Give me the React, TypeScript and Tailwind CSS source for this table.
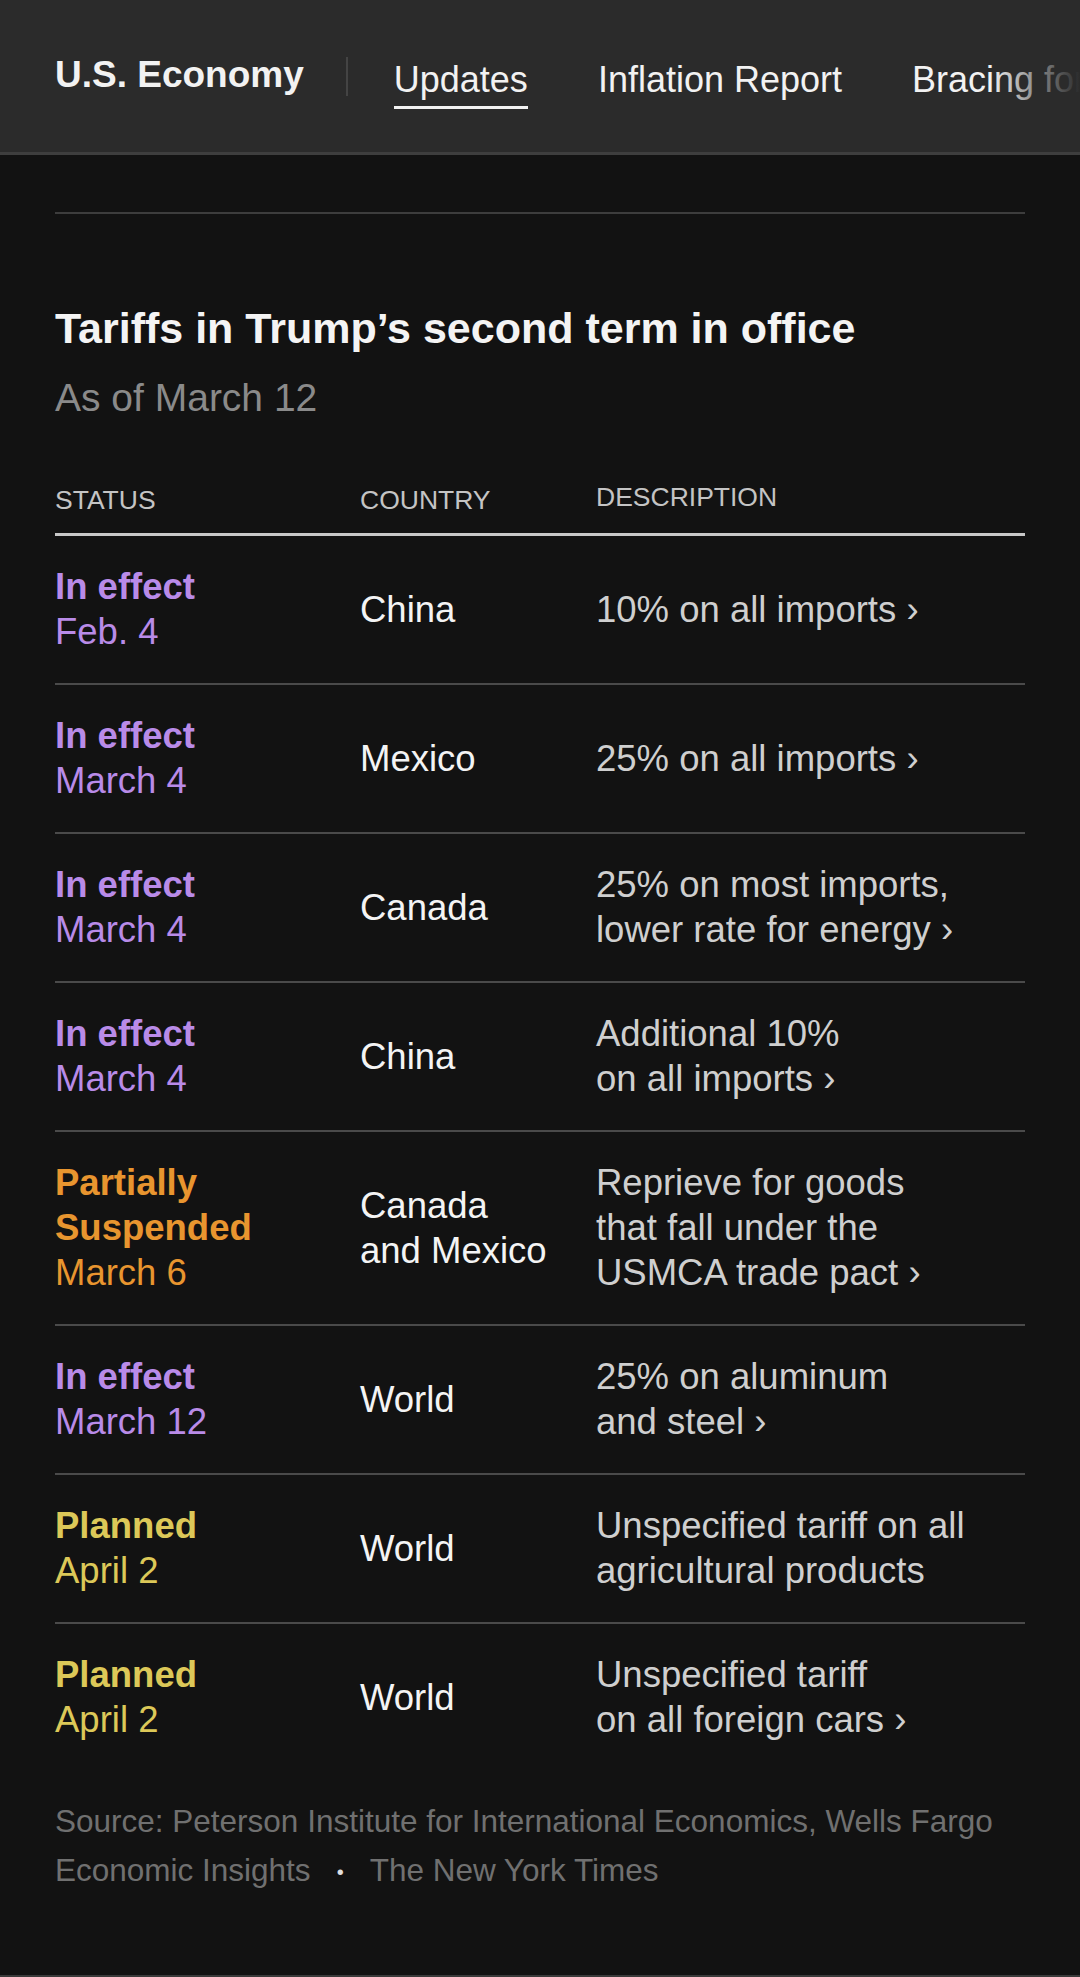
import React from "react";

type Row = {
  status: string[];
  date: string;
  tone: "purple" | "orange" | "yellow";
  country: string[];
  desc: string[];
  arrow: boolean;
};

const rows: Row[] = [
  { status: ["In effect"], date: "Feb. 4", tone: "purple", country: ["China"], desc: ["10% on all imports"], arrow: true },
  { status: ["In effect"], date: "March 4", tone: "purple", country: ["Mexico"], desc: ["25% on all imports"], arrow: true },
  {
    status: ["In effect"],
    date: "March 4",
    tone: "purple",
    country: ["Canada"],
    desc: ["25% on most imports,", "lower rate for energy"],
    arrow: true,
  },
  {
    status: ["In effect"],
    date: "March 4",
    tone: "purple",
    country: ["China"],
    desc: ["Additional 10%", "on all imports"],
    arrow: true,
  },
  {
    status: ["Partially", "Suspended"],
    date: "March 6",
    tone: "orange",
    country: ["Canada", "and Mexico"],
    desc: ["Reprieve for goods", "that fall under the", "USMCA trade pact"],
    arrow: true,
  },
  {
    status: ["In effect"],
    date: "March 12",
    tone: "purple",
    country: ["World"],
    desc: ["25% on aluminum", "and steel"],
    arrow: true,
  },
  {
    status: ["Planned"],
    date: "April 2",
    tone: "yellow",
    country: ["World"],
    desc: ["Unspecified tariff on all", "agricultural products"],
    arrow: false,
  },
  {
    status: ["Planned"],
    date: "April 2",
    tone: "yellow",
    country: ["World"],
    desc: ["Unspecified tariff", "on all foreign cars"],
    arrow: true,
  },
];

const toneClass = {
  purple: "text-[#b98be8]",
  orange: "text-[#e8952f]",
  yellow: "text-[#dcc858]",
};

const Header = () => (
  <div className="relative flex h-[155px] items-start overflow-hidden whitespace-nowrap border-b-[3px] border-[#3e3e3e] bg-[#2b2b2b] pl-[55px]">
    <div className="mt-[53px] shrink-0 text-[37px] font-bold leading-[44px] text-[#f2f2f2]">
      U.S. Economy
    </div>
    <div className="ml-[42px] mt-[57px] h-[39px] w-[2px] shrink-0 bg-[#444444]" />
    <div className="ml-[46px] mt-[58px] flex shrink-0 gap-[70px] text-[36px] leading-[44px] text-[#f2f2f2]">
      <div className="border-b-[3px] border-[#f2f2f2] pb-1">Updates</div>
      <div>Inflation Report</div>
      <div>Bracing for Higher Prices</div>
    </div>
    <div className="absolute right-0 top-0 h-[152px] w-[90px] bg-gradient-to-r from-[#2b2b2b00] to-[#2b2b2b]" />
  </div>
);

const TariffRow = ({ row, last }: { row: Row; last: boolean }) => (
  <div
    className={`grid grid-cols-[305px_236px_1fr] items-center pt-[28px] pb-[29px] text-[36.5px] leading-[45px] ${
      last ? "" : "border-b-2 border-[#4a4a4a]"
    }`}
  >
    <div className={toneClass[row.tone]}>
      {row.status.map((s) => (
        <div key={s} className="font-bold">
          {s}
        </div>
      ))}
      <div>{row.date}</div>
    </div>
    <div className="text-[#f4f4f4]">
      {row.country.map((c) => (
        <div key={c}>{c}</div>
      ))}
    </div>
    <div className="text-[#cfcfcf]">
      {row.desc.map((d, i) => (
        <div key={d}>
          {d}
          {row.arrow && i === row.desc.length - 1 ? " ›" : ""}
        </div>
      ))}
    </div>
  </div>
);

export default function App() {
  return (
    <div
      className="flex min-h-[1977px] flex-col bg-[#121212]"
      style={{ fontFamily: '"Liberation Sans", Arial, sans-serif' }}
    >
      <Header />
      <div className="px-[55px] pt-[57px]">
        <div className="h-[2px] bg-[#3d3d3d]" />
        <h1 className="mt-[89px] text-[43px] font-bold leading-[50px] text-[#f4f4f4]">
          Tariffs in Trump’s second term in office
        </h1>
        <div className="mt-[22px] text-[39px] leading-[46px] text-[#8a8a8a]">
          As of March 12
        </div>

        <div className="mt-[64px] grid grid-cols-[305px_236px_1fr] border-b-[3px] border-[#c8c8c8] pb-[18px] text-[26.5px] leading-[30px] text-[#c4c4c4]">
          <div>STATUS</div>
          <div>COUNTRY</div>
          <div className="-mt-[3px]">DESCRIPTION</div>
        </div>

        {rows.map((row, i) => (
          <TariffRow key={i} row={row} last={i === rows.length - 1} />
        ))}

        <div className="mt-[26px] text-[31.5px] leading-[49px] text-[#707070]">
          Source: Peterson Institute for International Economics, Wells Fargo
          Economic Insights
          <span className="mx-[26px] text-[20px] align-middle text-[#e0e0e0]">•</span>
          The New York Times
        </div>
      </div>
      <div className="mt-auto h-[2px] bg-[#3a3a3a]" />
    </div>
  );
}
